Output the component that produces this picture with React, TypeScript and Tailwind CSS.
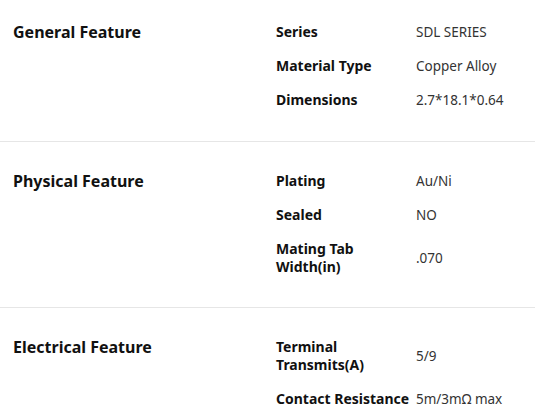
const sections = [
  {
    title: 'General Feature',
    rows: [
      ['Series', 'SDL SERIES'],
      ['Material Type', 'Copper Alloy'],
      ['Dimensions', '2.7*18.1*0.64'],
    ],
  },
  {
    title: 'Physical Feature',
    rows: [
      ['Plating', 'Au/Ni'],
      ['Sealed', 'NO'],
      ['Mating Tab Width(in)', '.070'],
    ],
  },
  {
    title: 'Electrical Feature',
    rows: [
      ['Terminal Transmits(A)', '5/9'],
      ['Contact Resistance', '5m/3mΩ max'],
    ],
  },
]

export default function App() {
  return (
    <div className="w-[535px] h-[414px] overflow-hidden bg-white font-['Noto_Sans',sans-serif] text-[#111]">
      {sections.map((s, i) => (
        <div
          key={s.title}
          className={`flex border-b border-[#e6e6e6] ${i === 0 ? 'pt-[15px] pb-[24px]' : 'pt-[22px] pb-[23px]'}`}
        >
          <div className="w-[276px] pl-[13px] pt-[7px] text-[16px] leading-[20px] font-bold">{s.title}</div>
          <div className="flex flex-col">
            {s.rows.map(([label, value]) => (
              <div key={label} className="flex items-center py-[8px]">
                <div className="w-[140px] pr-[4px] text-[14px] leading-[18px] font-bold">{label}</div>
                <div className="text-[13.5px] leading-[18px] text-[#333]">{value}</div>
              </div>
            ))}
          </div>
        </div>
      ))}
    </div>
  )
}
